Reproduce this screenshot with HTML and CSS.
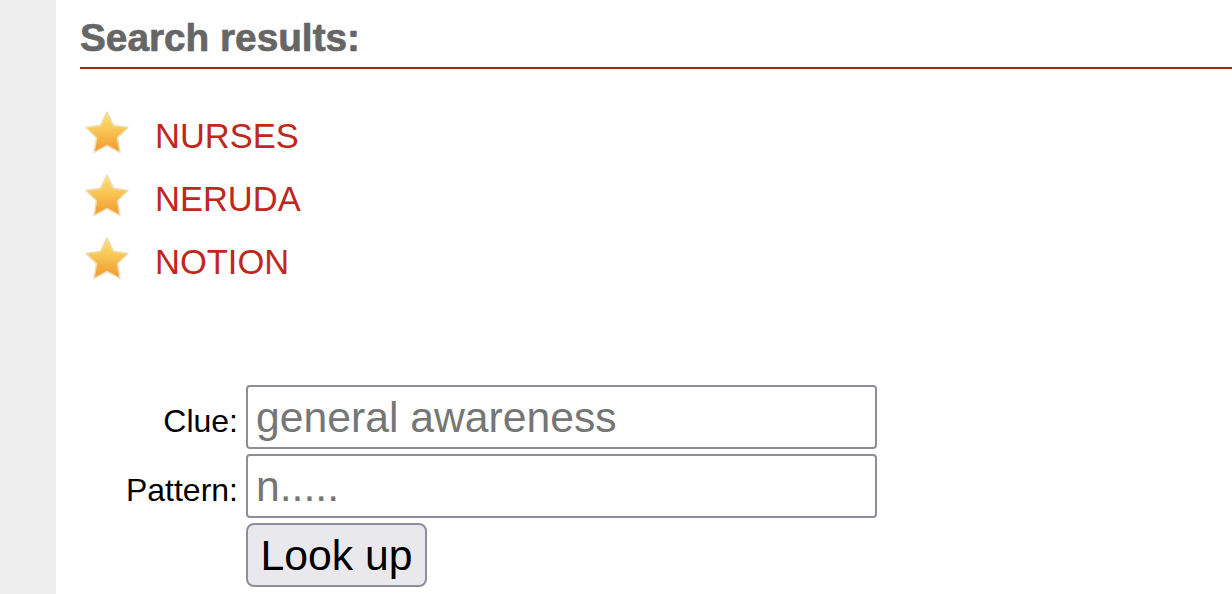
FILE: index.html
```html
<!DOCTYPE html>
<html lang="en">

<head>
    <meta charset="UTF-8">
    <meta name="viewport" content="width=device-width, initial-scale=1.0">
    <title>Crossword Helper</title>
    <link rel="stylesheet" href="styles.css">
</head>

<body>
    <div class="page">
        <div class="sidebar"></div>
        <div class="main">
            <h1>Search results:</h1>

            <ul class="results">
                <li>
                    <svg class="star" viewBox="1 1 42 40.5" width="44" height="43" preserveAspectRatio="none">
                        <defs>
                            <linearGradient id="starFill" x1="0" y1="0" x2="0" y2="1">
                                <stop offset="0" stop-color="#fde27e" />
                                <stop offset="0.5" stop-color="#f9c14f" />
                                <stop offset="1" stop-color="#ef9630" />
                            </linearGradient>
                        </defs>
                        <path d="M22 2 L28.17 14.51 L41.97 16.51 L31.99 26.24 L34.35 40 L22 33.5 L9.65 40 L12.01 26.24 L2.03 16.51 L15.83 14.51 Z" fill="url(#starFill)" stroke="#eedcae" stroke-width="1.5" stroke-linejoin="round" />
                    </svg>
                    <a href="#">NURSES</a>
                </li>
                <li>
                    <svg class="star" viewBox="1 1 42 40.5" width="44" height="43" preserveAspectRatio="none">
                        <path d="M22 2 L28.17 14.51 L41.97 16.51 L31.99 26.24 L34.35 40 L22 33.5 L9.65 40 L12.01 26.24 L2.03 16.51 L15.83 14.51 Z" fill="url(#starFill)" stroke="#eedcae" stroke-width="1.5" stroke-linejoin="round" />
                    </svg>
                    <a href="#">NERUDA</a>
                </li>
                <li>
                    <svg class="star" viewBox="1 1 42 40.5" width="44" height="43" preserveAspectRatio="none">
                        <path d="M22 2 L28.17 14.51 L41.97 16.51 L31.99 26.24 L34.35 40 L22 33.5 L9.65 40 L12.01 26.24 L2.03 16.51 L15.83 14.51 Z" fill="url(#starFill)" stroke="#eedcae" stroke-width="1.5" stroke-linejoin="round" />
                    </svg>
                    <a href="#">NOTION</a>
                </li>
            </ul>

            <form class="lookup" onsubmit="return false">
                <label for="clue">Clue:</label>
                <input type="text" id="clue" placeholder="general awareness">
                <label for="pattern">Pattern:</label>
                <input type="text" id="pattern" placeholder="n.....">
                <span></span>
                <div><button type="submit">Look up</button></div>
            </form>
        </div>
    </div>
</body>

</html>
```

FILE: styles.css
```css
body {
    margin: 0;
    font-family: "Liberation Sans", Arial, sans-serif;
    background-color: white;
    overflow: hidden;
}

.page {
    display: flex;
    min-height: 594px;
}

.sidebar {
    width: 56px;
    flex-shrink: 0;
    background-color: #eeeeee;
}

.main {
    flex: 1;
    padding-left: 24px;
}

h1 {
    margin: 16px 0 0;
    padding-bottom: 7px;
    font-size: 38.75px;
    line-height: 44px;
    font-weight: bold;
    color: #666666;
    -webkit-text-stroke: 0.7px #666666;
    border-bottom: 2px solid #a5281b;
}

.results {
    list-style-type: none;
    margin: 36px 0 0;
    padding: 0;
}

.results li {
    display: flex;
    align-items: center;
    height: 63px;
}

.star {
    margin-left: 5px;
    margin-right: 26px;
    margin-top: -9px;
}

.results a {
    font-size: 34.5px;
    color: #c0271d;
    text-decoration: none;
}

.lookup {
    display: grid;
    grid-template-columns: 158px 631px;
    column-gap: 8px;
    row-gap: 5px;
    align-items: baseline;
    margin-top: 91px;
}

.lookup label {
    font-size: 32px;
    text-align: right;
    color: black;
}

input[type="text"] {
    box-sizing: border-box;
    height: 64px;
    width: 631px;
    padding: 0 8px;
    border: 2px solid #8f8d99;
    border-radius: 4px;
    font-family: "Liberation Sans", Arial, sans-serif;
    font-size: 42.7px;
}

input::placeholder {
    color: #767676;
}

button {
    box-sizing: border-box;
    height: 64px;
    padding: 0 12.5px;
    border: 2px solid #8f8d99;
    border-radius: 8px;
    background-color: #e9e9ed;
    color: black;
    font-family: "Liberation Sans", Arial, sans-serif;
    font-size: 42.7px;
}
```
